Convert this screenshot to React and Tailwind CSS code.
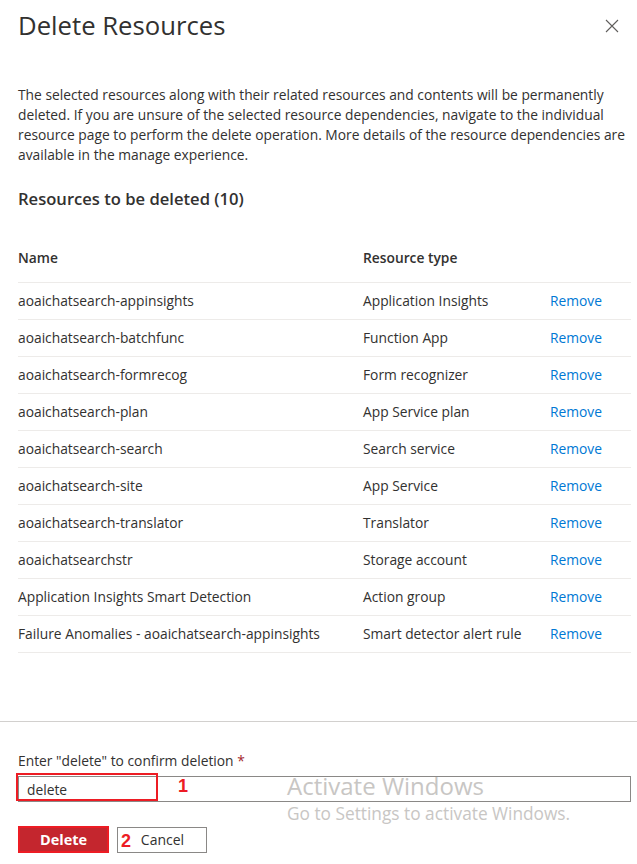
import React, { useState } from "react";

const resources = [
    { name: "aoaichatsearch-appinsights", type: "Application Insights" },
    { name: "aoaichatsearch-batchfunc", type: "Function App" },
    { name: "aoaichatsearch-formrecog", type: "Form recognizer" },
    { name: "aoaichatsearch-plan", type: "App Service plan" },
    { name: "aoaichatsearch-search", type: "Search service" },
    { name: "aoaichatsearch-site", type: "App Service" },
    { name: "aoaichatsearch-translator", type: "Translator" },
    { name: "aoaichatsearchstr", type: "Storage account" },
    { name: "Application Insights Smart Detection", type: "Action group" },
    { name: "Failure Anomalies - aoaichatsearch-appinsights", type: "Smart detector alert rule" },
];

const App = () => {
    const [confirmText, setConfirmText] = useState("delete");

    return (
        <div className="w-[637px] h-[864px] bg-white text-[#323130] font-['Segoe_UI','Open_Sans',sans-serif] overflow-hidden">
            {/* Header */}
            <div className="flex justify-between items-center pl-[18px] pr-[17px] pt-[10px]">
                <h1 className="text-[25.7px] leading-[32px] font-normal">Delete Resources</h1>
                <button className="w-[16px] h-[16px] flex items-center justify-center">
                    <svg width="14" height="14" viewBox="0 0 14 14">
                        <path d="M1 1 L13 13 M13 1 L1 13" stroke="#605e5c" strokeWidth="1.1" fill="none" />
                    </svg>
                </button>
            </div>

            {/* Description */}
            <div className="mt-[43px] px-[18px] text-[13.8px] leading-[20px]">
                <p className="whitespace-nowrap">The selected resources along with their related resources and contents will be permanently</p>
                <p className="whitespace-nowrap">deleted. If you are unsure of the selected resource dependencies, navigate to the individual</p>
                <p className="whitespace-nowrap">resource page to perform the delete operation. More details of the resource dependencies are</p>
                <p className="whitespace-nowrap">available in the manage experience.</p>
            </div>

            <h2 className="mt-[22px] px-[18px] text-[16.6px] leading-[24px] font-semibold">Resources to be deleted (10)</h2>

            {/* Table */}
            <div className="ml-[18px] mr-[6px] text-[13.8px] leading-[20px]">
                <div className="flex mt-[37px] pb-[14px] border-b border-[#edebe9] font-semibold">
                    <div className="w-[345px]">Name</div>
                    <div className="w-[187px]">Resource type</div>
                    <div className="flex-1"></div>
                </div>
                {resources.map((r) => (
                    <div key={r.name} className="flex items-center h-[37px] border-b border-[#edebe9]">
                        <div className="w-[345px] whitespace-nowrap">{r.name}</div>
                        <div className="w-[187px] whitespace-nowrap">{r.type}</div>
                        <a className="flex-1 text-[#0078d4] cursor-pointer">Remove</a>
                    </div>
                ))}
            </div>

            {/* Footer */}
            <div className="mt-[68px] border-t border-[#d2d0ce] pt-[29px] px-[18px] pr-[6px] relative">
                <label className="block text-[13.8px] leading-[20px]">
                    Enter "delete" to confirm deletion <span className="text-[#a4262c]">*</span>
                </label>
                <div className="relative mt-[5px]">
                    <input
                        value={confirmText}
                        onChange={(e) => setConfirmText(e.target.value)}
                        className="w-full h-[26px] border border-[#8a8886] px-[8px] text-[13.8px] text-[#323130] outline-none"
                    />
                    {/* annotation box */}
                    <div className="absolute left-[-2px] top-[-3px] w-[142px] h-[28px] border-2 border-[#ed1c24] pointer-events-none"></div>
                    <span className="absolute left-[160px] top-[0px] text-[18px] leading-[20px] font-bold text-[#ed1c24] font-['Liberation_Sans',sans-serif]">1</span>
                </div>
                <div className="flex items-center mt-[24px] gap-[8px]">
                    <button className="w-[91px] h-[27px] bg-[#c4262e] border-2 border-[#ed1c24] text-white text-[14.5px] font-bold">
                        Delete
                    </button>
                    <div className="relative">
                        <span className="absolute left-[4px] top-[4px] text-[18px] leading-[20px] font-bold text-[#ed1c24] font-['Liberation_Sans',sans-serif]">2</span>
                        <button className="w-[90px] h-[26px] border border-[#8a8886] text-[14px] text-[#323130] pl-[1px]">
                            Cancel
                        </button>
                    </div>
                </div>

                {/* Windows activation watermark */}
                <div className="absolute left-[287px] top-[49px] pointer-events-none text-[#c8c6c4]">
                    <div className="text-[24px] leading-[30px]">Activate Windows</div>
                    <div className="text-[17.3px] leading-[22px] mt-[2px]">Go to Settings to activate Windows.</div>
                </div>
            </div>
        </div>
    );
};

export default App;
